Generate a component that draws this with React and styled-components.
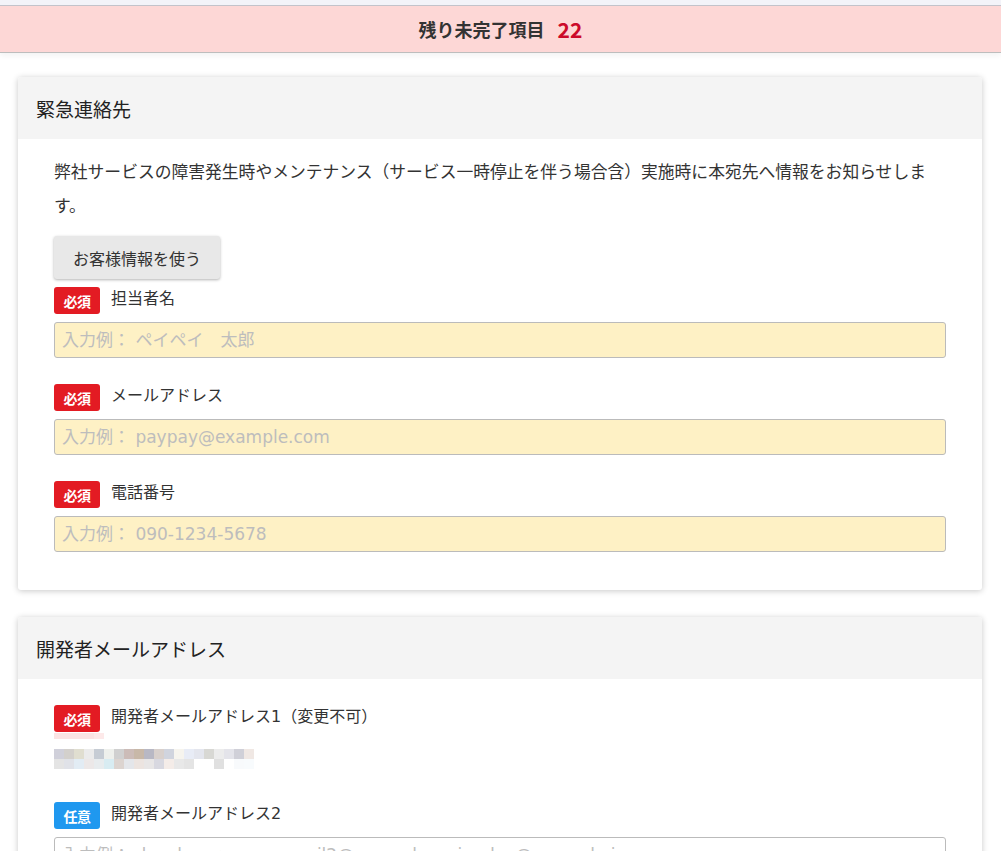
import React from "react";
import styled, { createGlobalStyle } from "styled-components";

const GlobalStyle = createGlobalStyle`
  html, body {
    margin: 0;
    padding: 0;
    background: #ffffff;
  }
  body {
    font-family: "DejaVu Sans", "Noto Sans CJK JP", sans-serif;
    color: #333333;
  }
  * { box-sizing: border-box; }
`;

const Page = styled.div`
  width: 100%;
  min-height: 851px;
  overflow: hidden;
`;

const TopStrip = styled.div`
  height: 6px;
  background: #f3f3f9;
  border-bottom: 1px solid #c4c4cc;
`;

const Banner = styled.div`
  height: 47px;
  background: #fdd7d6;
  border-bottom: 1px solid #bdbdbd;
  box-shadow: 0 3px 6px rgba(0, 0, 0, 0.05);
  display: flex;
  align-items: center;
  justify-content: center;
  gap: 13px;
`;

const BannerLabel = styled.span`
  font-family: "Noto Sans CJK JP", sans-serif;
  font-size: 18px;
  font-weight: 700;
  color: #333333;
`;

const Count = styled.span`
  font-family: "Noto Sans CJK JP", sans-serif;
  font-size: 21px;
  font-weight: 700;
  color: #cc0a2a;
  line-height: 1;
`;

const Main = styled.main`
  padding: 24px 19px 0 18px;
  display: flex;
  flex-direction: column;
  gap: 27px;
`;

const Card = styled.section`
  background: #ffffff;
  border-radius: 3px;
  box-shadow: 0 1px 6px rgba(0, 0, 0, 0.22);
  overflow: hidden;
`;

const CardHeader = styled.header`
  height: 62px;
  background: #f4f4f4;
  display: flex;
  align-items: center;
  padding: 0 18px;
`;

const CardTitle = styled.h2`
  margin: 0;
  font-family: "Noto Sans CJK JP", sans-serif;
  font-size: 19px;
  font-weight: 400;
  color: #222222;
`;

const CardBody = styled.div`
  padding: ${(p) => p.$pt}px 36px 38px 36px;
  display: flex;
  flex-direction: column;
`;

const Lead = styled.p`
  margin: 0;
  font-family: "Noto Sans CJK JP", sans-serif;
  font-size: 16.8px;
  line-height: 34px;
  color: #333333;
`;

const UseButton = styled.button`
  align-self: flex-start;
  margin-top: 14px;
  height: 43px;
  padding: 0 19px;
  border: none;
  border-radius: 3px;
  background: #e8e8e8;
  box-shadow: 0 1px 3px rgba(0, 0, 0, 0.3);
  font-family: "Noto Sans CJK JP", sans-serif;
  font-size: 16px;
  color: #333333;
  cursor: pointer;
`;

const Field = styled.div`
  margin-top: ${(p) => p.$mt}px;
  display: flex;
  flex-direction: column;
`;

const LabelRow = styled.div`
  display: flex;
  align-items: center;
  gap: 11px;
  height: 27px;
`;

const Badge = styled.span`
  flex: none;
  width: 46px;
  height: 27px;
  border-radius: 3px;
  background: ${(p) => (p.$optional ? "#1f98ef" : "#e31b23")};
  color: #ffffff;
  font-family: "Noto Sans CJK JP", sans-serif;
  font-size: 14px;
  font-weight: 700;
  display: flex;
  align-items: center;
  justify-content: center;
  letter-spacing: -0.5px;
`;

const Label = styled.span`
  font-size: 16px;
  color: #333333;
  line-height: 1;
  margin-top: -3px;
`;

const TextInput = styled.input`
  margin-top: 8px;
  width: 100%;
  height: 36px;
  border: 1px solid #bbbbbb;
  border-radius: 3px;
  background: ${(p) => (p.$filled ? "#fef1c5" : "#ffffff")};
  padding: 0 7px;
  font-family: "DejaVu Sans", "Noto Sans CJK JP", sans-serif;
  font-size: 17px;
  color: #333333;
  outline: none;
  &::placeholder {
    color: #bdbdbd;
  }
`;

const MosaicWrap = styled.div`
  margin-top: 1px;
  line-height: 0;
`;

const topRow = ["#fbe3e3", "#fbe3e3", "#fbe3e3", "#fbe3e3", "#fde9e9"];
const row1 = [
  "#d0d0da", "#d3d0cc", "#e0ded0", "#ebebeb", "#c6ccd4", "#eef0ec", "#d0d0d0",
  "#ccbcb8", "#c8b8a8", "#b8b8c4", "#d8d0cc", "#d0d4de", "#f6f4ee", "#e8ecf6",
  "#e4e6ee", "#d8d8d4", "#ececec", "#e4e4ea", "#d0d0d8", "#f0e8e4",
];
const row2 = [
  "#e4e4e4", "#e0e2e8", "#e2ecf4", "#ece8e8", "#e8ecee", "#d8ecf2", "#dcd4d0",
  "#e4e6ea", "#ece4e0", "#e8e6e6", "#d8d8e0", "#f4ece8", "#e8e8e8", "#e4e4e4",
  "#ffffff", "#ffffff", "#e0e0e0", "#ffffff", "#f8fafc", "#f8fbfd",
];

function Mosaic() {
  return (
    <MosaicWrap>
      <svg width="200" height="36" viewBox="0 0 200 36">
        {topRow.map((c, i) => (
          <rect key={"t" + i} x={i * 10} y={0} width={10} height={6} fill={c} />
        ))}
        {row1.map((c, i) => (
          <rect key={"a" + i} x={i * 10} y={16} width={10} height={10} fill={c} />
        ))}
        {row2.map((c, i) => (
          <rect key={"b" + i} x={i * 10} y={26} width={10} height={10} fill={c} />
        ))}
      </svg>
    </MosaicWrap>
  );
}

function RequiredField({ label, placeholder, mt }) {
  return (
    <Field $mt={mt}>
      <LabelRow>
        <Badge>必須</Badge>
        <Label>{label}</Label>
      </LabelRow>
      <TextInput $filled placeholder={placeholder} />
    </Field>
  );
}

export default function App() {
  return (
    <Page>
      <GlobalStyle />
      <TopStrip />
      <Banner>
        <BannerLabel>残り未完了項目</BannerLabel>
        <Count>22</Count>
      </Banner>
      <Main>
        <Card>
          <CardHeader>
            <CardTitle>緊急連絡先</CardTitle>
          </CardHeader>
          <CardBody $pt={15}>
            <Lead>
              弊社サービスの障害発生時やメンテナンス（サービス一時停止を伴う場合含）実施時に本宛先へ情報をお知らせします。
            </Lead>
            <UseButton type="button">お客様情報を使う</UseButton>
            <RequiredField mt={8} label="担当者名" placeholder="入力例： ペイペイ　太郎" />
            <RequiredField mt={26} label="メールアドレス" placeholder="入力例： paypay@example.com" />
            <RequiredField mt={26} label="電話番号" placeholder="入力例： 090-1234-5678" />
          </CardBody>
        </Card>
        <Card>
          <CardHeader>
            <CardTitle>開発者メールアドレス</CardTitle>
          </CardHeader>
          <CardBody $pt={26}>
            <Field $mt={0}>
              <LabelRow>
                <Badge>必須</Badge>
                <Label>開発者メールアドレス1（変更不可）</Label>
              </LabelRow>
              <Mosaic />
            </Field>
            <Field $mt={33}>
              <LabelRow>
                <Badge $optional>任意</Badge>
                <Label>開発者メールアドレス2</Label>
              </LabelRow>
              <TextInput placeholder="入力例： developer.paypay.mail2@example.co.jp, dev@example.jp" />
            </Field>
          </CardBody>
        </Card>
      </Main>
    </Page>
  );
}
